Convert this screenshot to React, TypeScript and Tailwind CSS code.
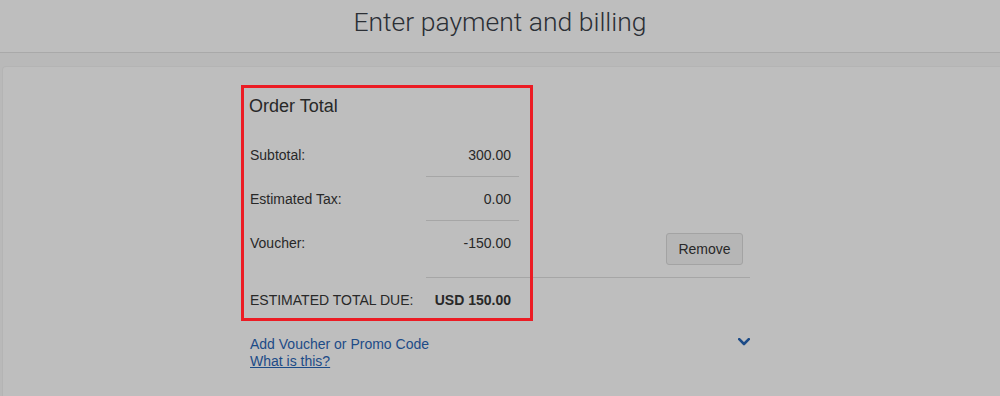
import React from "react";

type Row = {
  label: string;
  value: string;
};

const rows: Row[] = [
  { label: "Subtotal:", value: "300.00" },
  { label: "Estimated Tax:", value: "0.00" },
];

const App = () => {
  return (
    <div
      className="w-[1000px] h-[396px] overflow-hidden bg-[#bebebe] text-[#282828]"
      style={{ fontFamily: '"Liberation Sans", Arial, sans-serif' }}
    >
      {/* page header */}
      <div className="h-[53px] border-b border-[#a9a9a9] flex items-center justify-center pb-[8px]">
        <h1
          className="text-[26.5px] font-light text-[#2b2f35]"
          style={{ fontFamily: 'Roboto, "Open Sans", sans-serif' }}
        >
          Enter payment and billing
        </h1>
      </div>

      {/* grey strip above the panel */}
      <div className="bg-[#b9b9b9] pt-[13px]">
        <div className="ml-[2px] h-[343px] bg-[#bebebe] border-l border-t border-[#b4b4b4] rounded-tl-[4px]">
          <div className="relative ml-[238px] w-[509px] pt-[27px]">
            <h2 className="text-[18px] leading-[24px] pl-[8px]">Order Total</h2>

            <div className="mt-[15px] text-[14px]">
              {rows.map((r) => (
                <div key={r.label} className="flex h-[44px]">
                  <div className="w-[185px] pl-[9px] flex items-center pt-[1px]">{r.label}</div>
                  <div className="w-[93px] border-b border-[#a6a6a6] flex items-center justify-end pr-[8px] pt-[1px]">
                    {r.value}
                  </div>
                </div>
              ))}

              {/* voucher row with remove action */}
              <div className="flex h-[57px]">
                <div className="w-[185px] pl-[9px] pt-[14px] leading-[16px]">Voucher:</div>
                <div className="flex-1 flex border-b border-[#a6a6a6]">
                  <div className="w-[93px] text-right pr-[8px] pt-[14px] leading-[16px]">-150.00</div>
                  <div className="flex-1 flex justify-end pr-[7px] pt-[12px]">
                    <button className="w-[77px] h-[32px] rounded-[3px] border border-[#a3a3a3] bg-[#b6b6b6] text-[14px] text-[#282828]">
                      Remove
                    </button>
                  </div>
                </div>
              </div>

              <div className="flex h-[43px] items-center pt-[1px]">
                <div className="w-[185px] pl-[9px]">ESTIMATED TOTAL DUE:</div>
                <div className="w-[93px] text-right pr-[8px] font-bold">USD 150.00</div>
              </div>
            </div>

            {/* voucher link */}
            <div className="mt-[15px] pl-[9px] flex justify-between text-[14px] leading-[17px] text-[#1c4b87]">
              <div className="flex flex-col">
                <span>Add Voucher or Promo Code</span>
                <a className="underline">What is this?</a>
              </div>
              <svg width="12" height="8" viewBox="0 0 12 8" className="mt-[2px]">
                <polyline
                  points="1.2,1.2 6,6 10.8,1.2"
                  fill="none"
                  stroke="#1c4b87"
                  strokeWidth="2.6"
                  strokeLinecap="round"
                  strokeLinejoin="round"
                />
              </svg>
            </div>

            {/* highlight box drawn over the order total */}
            <div className="absolute left-0 top-[18px] w-[292px] h-[236px] border-[3px] border-[#ec1c24] pointer-events-none" />
          </div>
        </div>
      </div>
    </div>
  );
};

export default App;
